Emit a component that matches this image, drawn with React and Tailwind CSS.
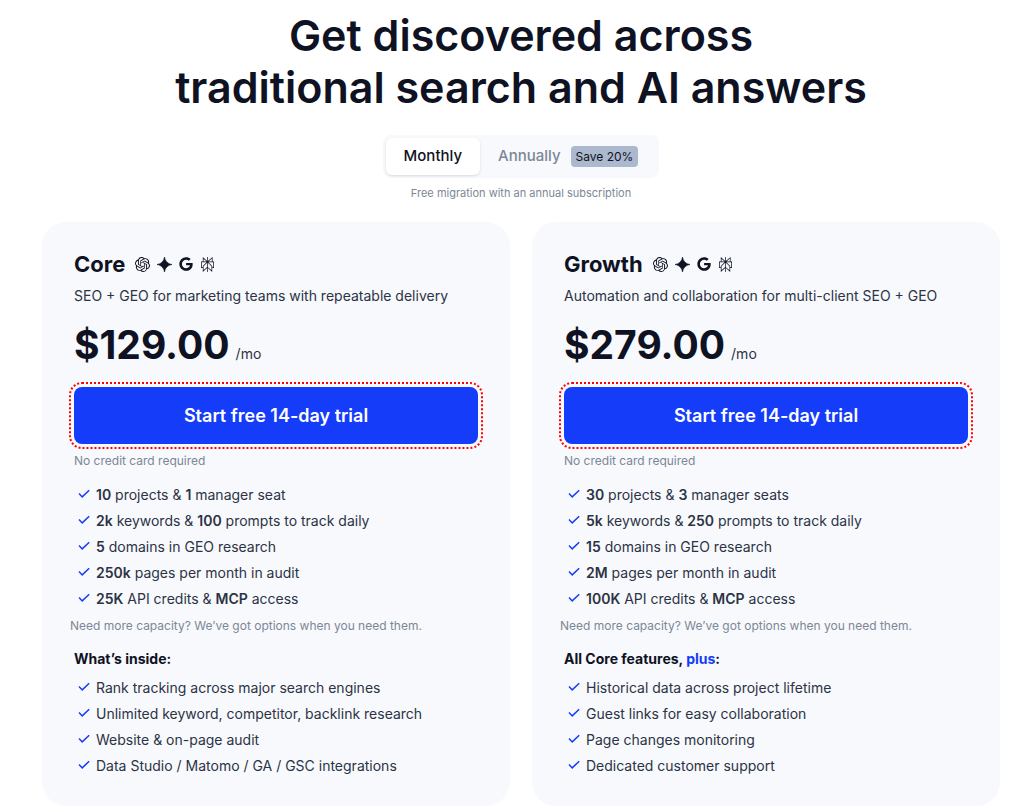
import React, { useState } from "react";
import { FaGoogle } from "react-icons/fa";
import { SiOpenai, SiPerplexity } from "react-icons/si";

const plans = [
  {
    name: "Core",
    description: "SEO + GEO for marketing teams with repeatable delivery",
    price: "$129.00",
    limits: [
      <><b>10</b> projects &amp; <b>1</b> manager seat</>,
      <><b>2k</b> keywords &amp; <b>100</b> prompts to track daily</>,
      <><b>5</b> domains in GEO research</>,
      <><b>250k</b> pages per month in audit</>,
      <><b>25K</b> API credits &amp; <b>MCP</b> access</>,
    ],
    featuresTitle: "What’s inside:",
    features: [
      "Rank tracking across major search engines",
      "Unlimited keyword, competitor, backlink research",
      "Website & on-page audit",
      "Data Studio / Matomo / GA / GSC integrations",
    ],
  },
  {
    name: "Growth",
    description: "Automation and collaboration for multi-client SEO + GEO",
    price: "$279.00",
    limits: [
      <><b>30</b> projects &amp; <b>3</b> manager seats</>,
      <><b>5k</b> keywords &amp; <b>250</b> prompts to track daily</>,
      <><b>15</b> domains in GEO research</>,
      <><b>2M</b> pages per month in audit</>,
      <><b>100K</b> API credits &amp; <b>MCP</b> access</>,
    ],
    featuresTitle: <>All Core features, <span className="text-[#143cf9]">plus</span>:</>,
    features: [
      "Historical data across project lifetime",
      "Guest links for easy collaboration",
      "Page changes monitoring",
      "Dedicated customer support",
    ],
  },
];

const CheckList = ({ items }) => (
  <ul className="pl-1 text-sm leading-[26px] text-[#2c3344] [&_b]:font-semibold">
    {items.map((item, i) => (
      <li key={i} className="flex items-center gap-1.5">
        <svg viewBox="0 0 12 12" className="size-3 shrink-0" fill="none" stroke="#143cf9" strokeWidth="1.5">
          <path d="M1 4.6 4.2 7.9 11.2 1.2" />
        </svg>
        <span>{item}</span>
      </li>
    ))}
  </ul>
);

const PlanCard = ({ plan }) => (
  <section className="rounded-3xl bg-[#f7f9fd] px-8 pt-[30px] pb-[27px]">
    <div className="flex items-center gap-2.5">
      <h2 className="text-[22px] leading-6 font-bold">{plan.name}</h2>
      <div className="flex items-center gap-[7px]">
        <SiOpenai className="size-[15px]" />
        <svg viewBox="0 0 16 16" className="size-[15px]" fill="currentColor">
          <path d="M8 0C8.7 4.6 11.4 7.3 16 8 11.4 8.7 8.7 11.4 8 16 7.3 11.4 4.6 8.7 0 8 4.6 7.3 7.3 4.6 8 0Z" stroke="currentColor" strokeWidth=".6" />
        </svg>
        <FaGoogle className="size-3.5" />
        <SiPerplexity className="size-[15px]" />
      </div>
    </div>
    <p className="mt-2.5 text-sm text-[#2c3344]">{plan.description}</p>
    <div className="mt-[15px] flex items-baseline gap-1.5">
      <span className="text-[39px] leading-[48px] font-bold">{plan.price}</span>
      <span className="text-sm text-[#2c3344]">/mo</span>
    </div>
    <a
      href="#"
      className="mt-[18px] flex h-[57px] items-center justify-center rounded-lg bg-[#143cf9] text-lg font-semibold text-white outline-2 outline-offset-3 outline-dotted outline-[#ff0000]"
    >
      Start free 14-day trial
    </a>
    <p className="mt-[7px] mb-[11px] text-xs leading-5 text-[#7c8797]">No credit card required</p>
    <CheckList items={plan.limits} />
    <p className="mt-1 -ml-1 text-xs leading-5 text-[#7c8797]">
      Need more capacity? We’ve got options when you need them.
    </p>
    <h3 className="mt-[13px] mb-1.5 text-sm font-bold">{plan.featuresTitle}</h3>
    <CheckList items={plan.features} />
  </section>
);

const App = () => {
  const [annual, setAnnual] = useState(false);
  const active = "bg-white text-[#0f1222] shadow-sm";
  const inactive = "text-[#7c8797]";

  return (
    <main className="bg-white pt-[9px] pr-2.5 pb-1 pl-[42px] font-['Inter',sans-serif] text-[#0f1222]">
      <h1 className="text-center text-[43px] leading-[52px] font-semibold">
        Get discovered across
        <br />
        traditional search and AI answers
      </h1>

      <div className="mt-[22px] flex justify-center">
        <div className="flex rounded-lg bg-[#f7f9fd] p-[3px] text-[15px] font-medium">
          <button
            type="button"
            onClick={() => setAnnual(false)}
            className={`h-[37px] rounded-md px-[18px] ${annual ? inactive : active}`}
          >
            Monthly
          </button>
          <button
            type="button"
            onClick={() => setAnnual(true)}
            className={`flex h-[37px] items-center gap-2.5 rounded-md px-[18px] ${annual ? active : inactive}`}
          >
            Annually
            <span className="rounded bg-[#acb8ce] px-[5px] text-xs leading-[21px] font-normal text-[#0f1222]">Save 20%</span>
          </button>
        </div>
      </div>
      <p className="mt-[5px] text-center text-[11px] leading-5 text-[#7c8797]">
        Free migration with an annual subscription
      </p>

      <div className="mt-[19px] grid grid-cols-2 gap-[22px]">
        {plans.map((plan) => (
          <PlanCard key={plan.name} plan={plan} />
        ))}
      </div>
    </main>
  );
};

export default App;
